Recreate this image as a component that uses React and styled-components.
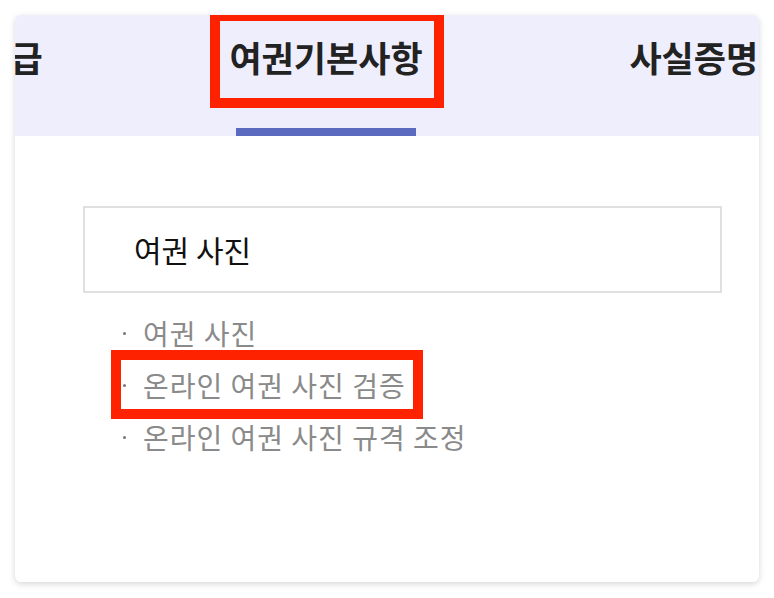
import { useLayoutEffect, useRef } from 'react';
import styled, { createGlobalStyle } from 'styled-components';

const GlobalStyle = createGlobalStyle`
	* {
		box-sizing: border-box;
	}
	body {
		margin: 0;
		background: #fff;
		font-family: 'Noto Sans CJK KR', 'Noto Sans', sans-serif;
	}
`;

const Page = styled.div`
	padding: 15px 15px 16px;
`;

const Card = styled.section`
	height: 567px;
	background: #fff;
	border-radius: 6px;
	box-shadow: 0 2px 6px rgba(0, 0, 0, 0.16);
	overflow: hidden;
`;

const TabBar = styled.nav`
	height: 121px;
	background: #eeeefd;
	overflow-x: auto;
	overflow-y: hidden;
	scrollbar-width: none;
	&::-webkit-scrollbar {
		display: none;
	}
`;

const TabTrack = styled.ul`
	display: flex;
	width: max-content;
	height: 100%;
	margin: 0;
	padding: 0;
	list-style: none;
`;

const Tab = styled.li`
	position: relative;
	width: 400px;
	height: 100%;
	display: flex;
	justify-content: center;
	padding-top: 18px;
	font-size: 35px;
	font-weight: 700;
	line-height: 48px;
	color: #222;
	white-space: nowrap;
	&::after {
		content: '';
		display: ${(p) => (p.$active ? 'block' : 'none')};
		position: absolute;
		left: 110px;
		bottom: 0;
		width: 180px;
		height: 8px;
		background: #5b6abf;
	}
`;

const Highlight = styled.span`
	position: absolute;
	border: 10px solid #ff2200;
	pointer-events: none;
`;

const Body = styled.div`
	padding: 70px 37px 0 68px;
`;

const TitleBox = styled.div`
	height: 87px;
	display: flex;
	align-items: center;
	padding: 0 0 2px 49px;
	border: 2px solid #e0e0e0;
	font-size: 30px;
	font-weight: 400;
	color: #111;
`;

const MenuList = styled.ul`
	margin: 14px 0 0;
	padding: 0 0 0 40px;
	list-style: none;
`;

const MenuItem = styled.li`
	position: relative;
	display: flex;
	align-items: center;
	height: 52px;
	font-size: 28px;
	letter-spacing: 1px;
	color: #8a8a8a;
	&::before {
		content: '';
		width: 3px;
		height: 3px;
		margin: 0 17px 0 0;
		border-radius: 50%;
		background: #777;
	}
`;

const tabs = ['전자여권 재발급', '여권기본사항', '사실증명발급'];
const menus = ['여권 사진', '온라인 여권 사진 검증', '온라인 여권 사진 규격 조정'];

function App() {
	const barRef = useRef(null);

	// 활성 탭이 보이도록 탭바 스크롤
	useLayoutEffect(() => {
		if (barRef.current) barRef.current.scrollLeft = 289;
	}, []);

	return (
		<Page>
			<GlobalStyle />
			<Card>
				<TabBar ref={barRef}>
					<TabTrack>
						{tabs.map((t, i) => (
							<Tab key={t} $active={i === 1}>
								{t}
								{i === 1 && <Highlight style={{ left: 84, top: -4, width: 234, height: 97 }} />}
							</Tab>
						))}
					</TabTrack>
				</TabBar>

				<Body>
					<TitleBox>여권 사진</TitleBox>
					<MenuList>
						{menus.map((m, i) => (
							<MenuItem key={m}>
								{m}
								{i === 1 && <Highlight style={{ left: -12, top: -9, width: 312, height: 69 }} />}
							</MenuItem>
						))}
					</MenuList>
				</Body>
			</Card>
		</Page>
	);
}

export default App;
